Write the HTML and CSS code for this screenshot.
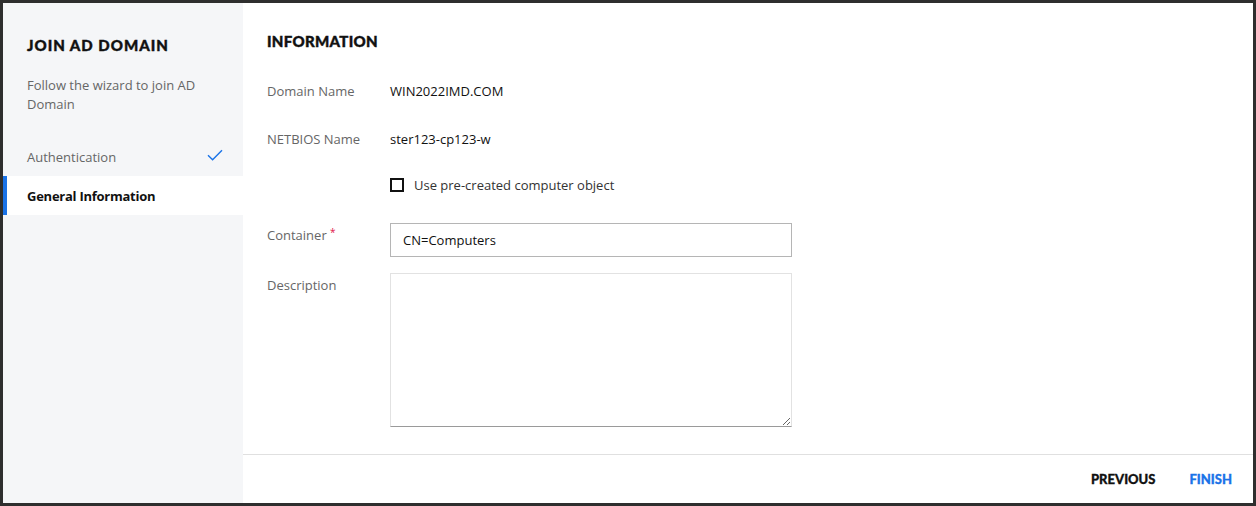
FILE: index.html
```html
<!DOCTYPE html>
<html>
<head>
<meta charset="utf-8">
<link rel="stylesheet" href="styles.css">
</head>
<body>
<div class="dialog">
  <aside class="sidebar">
    <h1 class="side-title">JOIN AD DOMAIN</h1>
    <p class="side-desc">Follow the wizard to join AD Domain</p>
    <ul class="steps">
      <li class="step done">
        <span>Authentication</span>
        <svg class="check" width="16" height="12" viewBox="0 0 16 12"><path d="M1 6.2 L5.6 10.8 L15 1.2" fill="none" stroke="#1a73e8" stroke-width="1.4"/></svg>
      </li>
      <li class="step active"><span>General Information</span></li>
    </ul>
  </aside>
  <main class="main">
    <div class="content">
      <h2 class="section-title">INFORMATION</h2>
      <div class="row">
        <div class="label">Domain Name</div>
        <div class="value">WIN2022IMD.COM</div>
      </div>
      <div class="row row-netbios">
        <div class="label">NETBIOS Name</div>
        <div class="value">ster123-cp123-w</div>
      </div>
      <div class="row row-check">
        <div class="label"></div>
        <label class="checkline"><span class="box"></span><span>Use pre-created computer object</span></label>
      </div>
      <div class="row row-input">
        <div class="label field-label">Container <span class="req">*</span></div>
        <input class="text-input" type="text" value="CN=Computers">
      </div>
      <div class="row row-area">
        <div class="label field-label">Description</div>
        <textarea class="text-area"></textarea>
      </div>
    </div>
    <footer class="footer">
      <button class="btn">PREVIOUS</button>
      <button class="btn btn-primary">FINISH</button>
    </footer>
  </main>
</div>
</body>
</html>
```
FILE: styles.css
```css
* { box-sizing: border-box; }
html, body { margin: 0; padding: 0; }
body {
  background: #2e2e2e;
  font-family: "Open Sans", "Noto Sans", sans-serif;
  font-size: 13px;
  color: #111;
  height: 506px;
  padding: 3px;
}
.dialog {
  display: flex;
  width: 1250px;
  height: 500px;
  background: #fff;
  overflow: hidden;
}
.sidebar {
  width: 240px;
  background: #f5f6f8;
  padding-top: 32px;
}
.side-title {
  margin: 0 0 21px 24px;
  font-family: "Lato", sans-serif;
  font-weight: 900;
  font-size: 15px;
  letter-spacing: 1px;
  line-height: 20px;
  color: #111;
  -webkit-text-stroke: 0.4px #111;
}
.side-desc {
  margin: 0 20px 23px 24px;
  font-size: 13px;
  line-height: 19px;
  color: #666;
}
.steps { list-style: none; margin: 0; padding: 0; }
.step {
  height: 39px;
  display: flex;
  align-items: center;
  justify-content: space-between;
  padding: 0 20px 0 24px;
  color: #666;
  font-size: 13px;
}
.step .check { margin-top: -4px; }
.step.active {
  background: #fff;
  border-left: 4px solid #1a73e8;
  padding-left: 20px;
  color: #111;
  font-weight: 700;
  letter-spacing: -0.25px;
}
.main {
  flex: 1;
  display: flex;
  flex-direction: column;
  min-height: 0;
}
.content {
  flex: 1;
  min-height: 0;
  padding: 28px 24px 0 24px;
}
.section-title {
  margin: 0 0 30px 0;
  font-family: "Lato", sans-serif;
  font-weight: 900;
  font-size: 15px;
  letter-spacing: 0.3px;
  line-height: 20px;
  color: #111;
  -webkit-text-stroke: 0.4px #111;
}
.row {
  display: flex;
  line-height: 20px;
  margin-bottom: 28px;
}
.row-netbios { margin-bottom: 26px; }
.label {
  width: 123px;
  flex: none;
  color: #666;
}
.value { color: #111; }
.row-check { margin-bottom: 28px; height: 20px; }
.checkline {
  display: flex;
  align-items: center;
  color: #333;
  height: 20px;
}
.box {
  width: 14px;
  height: 14px;
  border: 2px solid #111;
  margin-right: 10px;
}
.field-label { padding-top: 2px; }
.req { color: #e0154a; font-size: 10px; vertical-align: top; position: relative; top: -3px; }
.row-input { margin-bottom: 16px; }
.text-input {
  width: 402px;
  height: 34px;
  border: 1px solid #b5b5b5;
  padding: 0 12px;
  font-family: "Open Sans", sans-serif;
  font-size: 13px;
  color: #111;
  outline: none;
}
.text-area {
  display: block;
  width: 402px;
  height: 154px;
  border: 1px solid #e2e2e2;
  border-bottom: 1px solid #9a9a9a;
  font-family: "Open Sans", sans-serif;
  font-size: 13px;
  outline: none;
  resize: vertical;
}
.footer {
  flex: none;
  height: 49px;
  border-top: 1px solid #e0e0e0;
  display: flex;
  justify-content: flex-end;
  align-items: center;
  padding-right: 21px;
  gap: 34px;
}
.btn {
  background: none;
  border: none;
  padding: 0;
  font-family: "Lato", sans-serif;
  font-weight: 900;
  font-size: 13px;
  letter-spacing: 0;
  color: #111;
  cursor: pointer;
  -webkit-text-stroke: 0.3px currentColor;
}
.btn-primary { color: #1a73e8; }
```
